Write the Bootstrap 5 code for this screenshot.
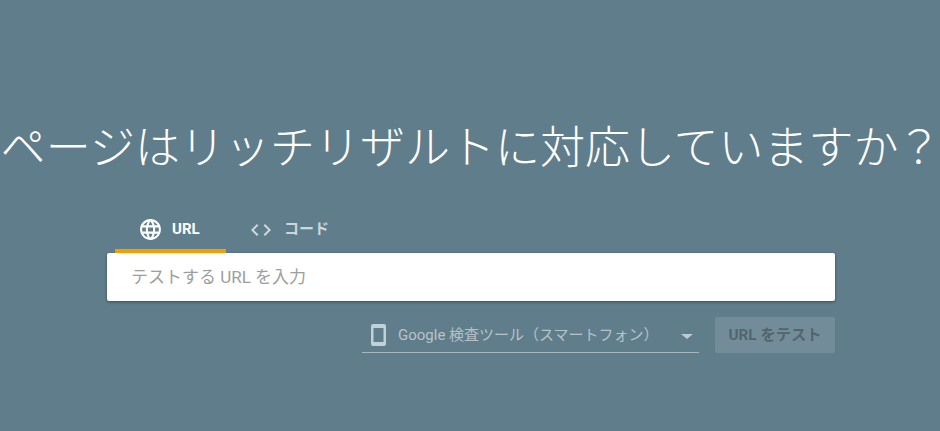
<!DOCTYPE html>
<html lang="ja">
<head>
<meta charset="utf-8">
<title>リッチリザルト テスト</title>
<link href="https://cdn.jsdelivr.net/npm/bootstrap@5.3.0/dist/css/bootstrap.min.css" rel="stylesheet">
<style>
html,body{height:100%}
body{background:#607d8b;font-family:Roboto,"Noto Sans CJK JP",sans-serif;overflow:hidden}
.hero-title{margin:0;padding-top:120px;padding-right:8px;height:212px;font-size:45px;line-height:58px;font-weight:300;color:#fff;text-align:center;white-space:nowrap;font-family:Roboto,"Noto Sans CJK JP",sans-serif}
.edge-glyph{font-feature-settings:"palt"}
.edge-end{margin-left:4px}
.panel-wrap{width:728px;margin-left:107px}
.tab-row{height:41px;padding-left:8px}
.tab-item{height:41px;width:111px;font-size:15px;font-weight:700;color:rgba(255,255,255,.7);border-bottom:4px solid transparent;padding-bottom:2px}
.tab-item.is-on{color:#fff;border-bottom-color:#f59e00;padding-left:23px}
.tab-item.is-on svg{margin-right:9px}
.tab-item.code-tab{width:auto;padding-left:23px}
.tab-item.code-tab svg{margin-right:11px}
.url-box{height:48px;background:#fff;border-radius:2px;box-shadow:0 1px 3px rgba(0,0,0,.4);padding:1px 24px 0;font-size:17px;color:#9e9e9e}
.ctl-row{margin-top:16px;height:36px}
.dev-select{width:337px;height:36px;margin-right:16px;border-bottom:1px solid rgba(255,255,255,.45);color:rgba(255,255,255,.55);font-size:15px;padding-left:9px}
.dev-select svg.phone{margin-right:12px}
.dev-label{padding-top:2px}
.dev-arrow{width:0;height:0;border-left:6px solid transparent;border-right:6px solid transparent;border-top:5px solid rgba(255,255,255,.6);margin-left:auto;margin-right:6px;margin-top:4px}
.test-btn{width:120px;height:36px;background:rgba(255,255,255,.12);border:0;border-radius:2px;color:rgba(0,0,0,.3);font-size:15.3px;font-weight:700;padding:0}
</style>
</head>
<body>
<h1 class="hero-title"><span class="edge-glyph">ペ</span>ージはリッチリザルトに対応していますか<span class="edge-glyph edge-end">？</span></h1>
<main class="panel-wrap">
  <div class="tab-row d-flex">
    <div class="tab-item is-on d-flex align-items-center">
      <svg width="25" height="25" viewBox="0 0 24 24" fill="#fff"><path d="M11.99 2C6.47 2 2 6.48 2 12s4.47 10 9.99 10C17.52 22 22 17.52 22 12S17.52 2 11.99 2zm6.93 6h-2.95c-.32-1.25-.78-2.45-1.38-3.56 1.84.63 3.37 1.91 4.33 3.56zM12 4.04c.83 1.2 1.48 2.53 1.91 3.96h-3.82c.43-1.43 1.08-2.76 1.91-3.96zM4.26 14C4.1 13.36 4 12.69 4 12s.1-1.36.26-2h3.38c-.08.66-.14 1.32-.14 2 0 .68.06 1.34.14 2H4.26zm.82 2h2.95c.32 1.25.78 2.45 1.38 3.56-1.84-.63-3.37-1.9-4.33-3.56zm2.95-8H5.08c.96-1.66 2.49-2.93 4.33-3.56C8.81 5.55 8.35 6.75 8.03 8zM12 19.96c-.83-1.2-1.48-2.53-1.91-3.96h3.82c-.43 1.43-1.08 2.76-1.91 3.96zM14.34 14H9.66c-.09-.66-.16-1.32-.16-2 0-.68.07-1.35.16-2h4.68c.09.65.16 1.32.16 2 0 .68-.07 1.34-.16 2zm.25 5.56c.6-1.11 1.06-2.31 1.38-3.56h2.95c-.96 1.65-2.49 2.93-4.33 3.56zM16.36 14c.08-.66.14-1.32.14-2 0-.68-.06-1.34-.14-2h3.38c.16.64.26 1.31.26 2s-.1 1.36-.26 2h-3.38z"/></svg>
      <span>URL</span>
    </div>
    <div class="tab-item code-tab d-flex align-items-center">
      <svg width="24" height="24" viewBox="0 0 24 24" fill="rgba(255,255,255,.7)"><path d="M9.4 16.6 4.8 12l4.6-4.6L8 6l-6 6 6 6 1.4-1.4zm5.2 0 4.6-4.6-4.6-4.6L16 6l6 6-6 6-1.4-1.4z"/></svg>
      <span>コード</span>
    </div>
  </div>
  <div class="url-box d-flex align-items-center">テストする URL を入力</div>
  <div class="ctl-row d-flex justify-content-end">
    <div class="dev-select d-flex align-items-center">
      <svg class="phone" width="15" height="22" viewBox="0 0 15 22"><path fill="#c2d0da" fill-rule="evenodd" d="M2 0h11a2 2 0 0 1 2 2v18a2 2 0 0 1-2 2H2a2 2 0 0 1-2-2V2a2 2 0 0 1 2-2zm.5 4v14h10V4z"/></svg>
      <span class="dev-label">Google 検査ツール（スマートフォン）</span>
      <span class="dev-arrow"></span>
    </div>
    <button class="test-btn" type="button" disabled>URL をテスト</button>
  </div>
</main>
<script src="https://cdn.jsdelivr.net/npm/bootstrap@5.3.0/dist/js/bootstrap.bundle.min.js"></script>
</body>
</html>
